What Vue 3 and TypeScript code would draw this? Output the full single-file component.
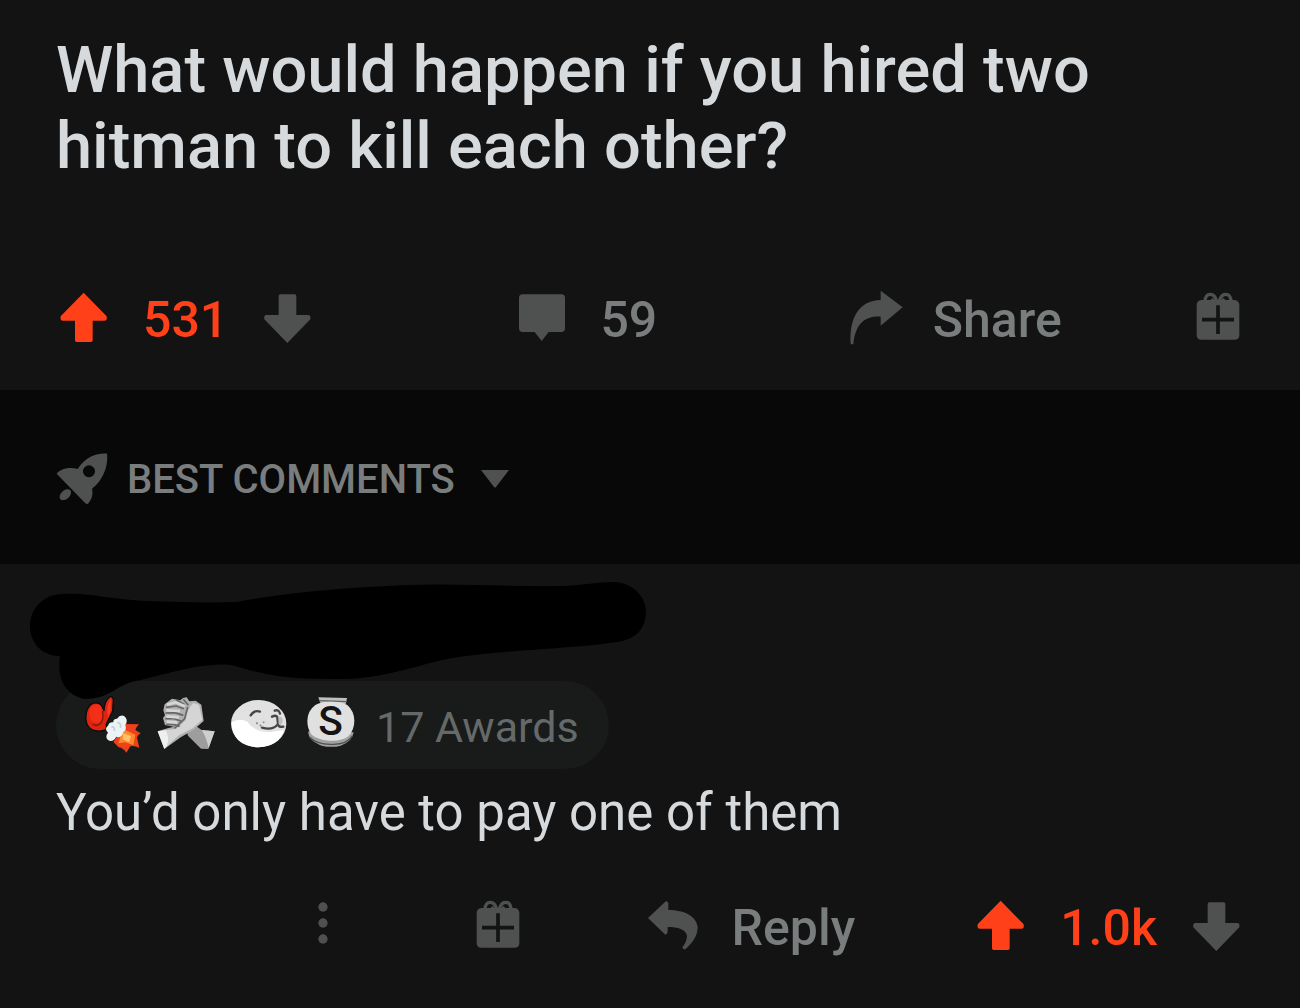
<script setup lang="ts">
import { ref } from 'vue'

interface Thread {
  title: string
  score: string
  comments: number
}

interface Comment {
  body: string
  awards: number
  score: string
}

const thread: Thread = {
  title: 'What would happen if you hired two hitman to kill each other?',
  score: '531',
  comments: 59,
}

const comment: Comment = {
  body: 'You’d only have to pay one of them',
  awards: 17,
  score: '1.0k',
}

const sortOptions: string[] = ['BEST COMMENTS', 'TOP COMMENTS', 'NEW COMMENTS']
const sort = ref(sortOptions[0])
</script>

<template>
  <main class="page">
    <article class="post">
      <h1 class="title">{{ thread.title }}</h1>
      <div class="post-actions">
        <div class="votes">
          <button class="vote up" type="button" aria-label="Upvote">
            <svg viewBox="0 0 141 156"><path d="M71 2 L140 73 Q142 86 134 86 H98 V145 Q98 150 93 150 H50 Q45 150 45 145 V86 H8 Q0 86 2 73 Z" /></svg>
          </button>
          <span class="score">{{ thread.score }}</span>
          <button class="vote" type="button" aria-label="Downvote">
            <svg viewBox="0 0 141 156"><path d="M70 153 L139 82 Q141 69 133 69 H97 V12 Q97 7 92 7 H49 Q44 7 44 12 V69 H7 Q-1 69 1 82 Z" /></svg>
          </button>
        </div>
        <button class="action" type="button" aria-label="Comments">
          <svg class="bubble" viewBox="0 0 144 156"><path d="M14 7 H130 Q141 7 141 18 V109 Q141 120 130 120 H92 L71 147 L50 120 H14 Q3 120 3 109 V18 Q3 7 14 7 Z" /></svg>
          <span>{{ thread.comments }}</span>
        </button>
        <button class="action share" type="button">
          <svg class="share-icon" viewBox="0 0 162 168"><path d="M95 2 L161 52 L95 107 V80 C50 78 20 98 13 163 H5 C0 84 30 31 95 30 Z" /></svg>
          <span>Share</span>
        </button>
        <button class="gift" type="button" aria-label="Give award">
          <svg viewBox="0 0 132 156"><g class="bow"><path d="M62 30 Q58 7 43 7 Q28 7 27 28" /><path d="M70 30 Q74 7 89 7 Q104 7 105 28" /></g><path d="M16 24 H44 L50 17 L55 24 H77 L82 17 L88 24 H116 Q130 26 130 40 V128 Q130 143 116 143 H16 Q2 143 2 128 V40 Q2 26 16 24 Z" /><path class="ribbon" d="M66 40 V126 M18 83 H114" /></svg>
        </button>
      </div>
    </article>

    <div class="sort-bar">
      <label for="sort">
        <svg class="rocket" role="img" aria-label="Sort comments" viewBox="0 0 156 156"><path fill-rule="evenodd" d="M153 2 C125 0 91 8 65 48 C42 42 16 46 2 62 L88 151 Q94 156 98 150 C110 134 111 121 108 107 C144 79 157 36 153 2 Z M99 37 A18 18 0 1 1 98.900 37 Z" /><ellipse cx="28" cy="125" rx="20" ry="13" transform="rotate(-42 28 125)" /></svg>
      </label>
      <select id="sort" v-model="sort" class="sort">
        <option v-for="option in sortOptions" :key="option">{{ option }}</option>
      </select>
      <svg class="caret" viewBox="0 0 30 18"><path d="M1 0 H29 L16 17 Q15 18 14 17 Z" /></svg>
    </div>

    <section class="comment">
      <div class="author">
        <svg class="redaction" viewBox="0 0 616 118"><path d="M33 12 C58 10 76 17 118 19 C150 20 178 21 206 20 C265 9 318 6 376 3 C428 1 482 5 535 4 C552 3 568 0 586 0 C604 2 616 15 616 31 C615 47 606 56 592 59 C549 67 476 67 417 77 C384 84 350 98 307 97 C272 97 245 97 202 83 C174 80 139 91 111 98 C87 101 81 117 55 117 C37 114 26 98 30 74 C12 74 0 61 0 44 C0 27 13 12 33 12 Z" /></svg>
      </div>

      <div class="awards">
        <svg class="award" viewBox="102 66 174 174">
          <path d="M169 150 L188 111 L190 77 Q187 65 179 69 Q163 81 162 111 L153 92 Q140 82 123 91 Q105 108 108 138 Q111 164 135 170 Q151 174 169 167 Z" fill="#df250f" stroke="#080b0b" stroke-width="4" />
          <path d="M121 102 Q139 83 154 99 Q165 119 157 139 Q147 151 130 145 Q112 130 121 102 Z" fill="#f52f17" />
          <path d="M157 111 Q163 133 151 149 Q141 158 128 151" fill="none" stroke="#861c12" stroke-width="5" />
          <path d="M172 112 Q172 85 183 75 L182 110 L174 131 Z" fill="#fa3a21" />
          <path d="M228 150 L267 151 Q258 160 256 168 L272 178 Q262 184 261 190 L268 221 Q252 214 241 217 L229 236 Q220 222 206 220 L190 204 Z" fill="#ed401c" />
          <path d="M219 165 L256 182 L250 213 L225 205 L205 208 Z" fill="#ff882b" />
          <path d="M220 178 L243 186 L238 204 L218 196 Z" fill="#ffc169" />
          <path d="M201 134 Q212 119 225 128 Q235 140 226 153 Q231 168 220 174 Q215 194 199 188 Q188 207 174 198 Q164 188 174 176 Q162 164 174 155 Q178 143 190 145 Q189 134 201 134 Z" fill="#edf3f5" />
          <path d="M184 160 Q195 155 193 171 M202 146 Q215 147 211 161" fill="none" stroke="#bdd2da" stroke-width="5" />
        </svg>
        <svg class="award" viewBox="321 66 174 174">
          <path d="M410 172 L430 151 L455 168 L494 172 L475 225 L453 224 L414 185 Z" fill="#9d9d9d" />
          <path d="M455 168 L494 172 L476 222 Q469 190 455 168 Z" fill="#cecece" />
          <path d="M344 91 L366 74 L391 79 L399 72 L410 70 L418 82 L437 80 L454 92 L461 141 L430 168 L392 190 L343 225 L323 172 L353 163 L372 158 L345 153 L339 132 L345 124 L340 109 Z" fill="#b0b0b0" />
          <path d="M430 87 L447 92 L457 137 L428 163 L387 184 L351 216 Q358 187 348 168 L378 165 L407 139 Q411 104 430 87 Z" fill="#d5d5d5" />
          <path d="M323 172 L348 168 Q359 190 351 216 L343 225 Z" fill="#efefef" />
          <path d="M348 100 L379 96 L402 104 M346 117 L375 116 L400 124 M346 134 L373 134 L397 143 M349 151 L373 152 L389 157 M378 77 L404 92 M400 76 L415 94 M413 99 L404 134 L373 163" fill="none" stroke="#666" stroke-width="5" />
          <path d="M351 92 L377 85 L405 97 M349 109 L390 111 M349 127 L387 130 M350 143 L382 146" fill="none" stroke="#d6d6d6" stroke-width="8" />
        </svg>
        <svg class="award" viewBox="60 66 174 174">
          <ellipse cx="146" cy="149" rx="83" ry="71" fill="#e1e1e1" />
          <path d="M65 145 Q88 130 112 143 Q132 174 181 174 L222 168 Q207 217 145 220 Q66 216 65 145 Z" fill="#fff" />
          <path d="M122 124 Q133 107 150 113 M194 110 Q206 105 210 119 M186 128 Q198 122 202 129 L204 151 Q207 161 220 158 M203 151 Q189 170 156 161" fill="none" stroke="#454545" stroke-width="7" stroke-linecap="round" />
          <path d="M140 145 L142 151 M150 152 L153 157 M160 143 L162 147" stroke="#888" stroke-width="5" />
          <ellipse cx="209" cy="140" rx="9" ry="12" fill="#bebebe" />
          <path d="M202 130 L204 153 Q210 162 219 157" fill="none" stroke="#4a4a4a" stroke-width="5" />
        </svg>
        <svg class="award" viewBox="279 66 174 174">
          <path d="M325 70 L411 72 L407 91 L331 86 Z" fill="#c0c0c0" />
          <path d="M327 80 L411 83" stroke="#606060" stroke-width="4" />
          <path d="M295 172 Q294 200 335 215 Q366 222 392 215 Q428 202 431 175 Z" fill="#a0a0a0" />
          <path d="M298 189 Q322 213 368 211 Q410 212 428 185" fill="none" stroke="#4f4f4f" stroke-width="4" />
          <path d="M316 93 Q330 83 362 83 Q397 83 412 93 Q433 112 433 140 Q433 168 415 187 Q396 202 358 200 Q320 196 305 182 Q292 165 292 140 Q293 110 316 93 Z" fill="#e0e0e0" />
          <text x="362" y="184" text-anchor="middle" class="coin-letter">S</text>
        </svg>
        <span>{{ comment.awards }} Awards</span>
      </div>

      <p class="body">{{ comment.body }}</p>

      <div class="comment-actions">
        <button class="more" type="button" aria-label="More options">
          <svg viewBox="0 0 150 156"><circle cx="75" cy="21" r="14" /><circle cx="75" cy="69" r="14" /><circle cx="75" cy="117" r="14" /></svg>
        </button>
        <button class="gift wide" type="button" aria-label="Give award">
          <svg viewBox="0 0 132 156"><g class="bow"><path d="M62 30 Q58 7 43 7 Q28 7 27 28" /><path d="M70 30 Q74 7 89 7 Q104 7 105 28" /></g><path d="M16 24 H44 L50 17 L55 24 H77 L82 17 L88 24 H116 Q130 26 130 40 V128 Q130 143 116 143 H16 Q2 143 2 128 V40 Q2 26 16 24 Z" /><path class="ribbon" d="M66 40 V126 M18 83 H114" /></svg>
        </button>
        <button class="action reply" type="button">
          <svg class="reply-icon" viewBox="0 0 150 156"><path d="M52 5 L0 54 L52 104 Q61 103 59 81 C88 81 115 87 117 109 Q116 126 103 142 Q105 149 112 148 C132 130 149 109 149 82 C146 49 110 30 61 30 V9 Q59 2 52 5 Z" /></svg>
          <span>Reply</span>
        </button>
        <div class="votes">
          <button class="vote up" type="button" aria-label="Upvote">
            <svg viewBox="0 0 141 156"><path d="M71 2 L140 73 Q142 86 134 86 H98 V145 Q98 150 93 150 H50 Q45 150 45 145 V86 H8 Q0 86 2 73 Z" /></svg>
          </button>
          <span class="score">{{ comment.score }}</span>
          <button class="vote" type="button" aria-label="Downvote">
            <svg viewBox="0 0 141 156"><path d="M70 153 L139 82 Q141 69 133 69 H97 V12 Q97 7 92 7 H49 Q44 7 44 12 V69 H7 Q-1 69 1 82 Z" /></svg>
          </button>
        </div>
      </div>
    </section>
  </main>
</template>

<style>
body {
  margin: 0;
  background: #131313;
}
</style>

<style scoped>
.page {
  font-family: Roboto, "Liberation Sans", sans-serif;
  color: #d7dadc;
}

svg {
  display: block;
  flex: none;
  fill: #4f5050;
}

button {
  display: flex;
  align-items: center;
  padding: 0;
  border: 0;
  background: none;
  color: #7a7d7d;
  font: inherit;
  cursor: pointer;
}

.post {
  padding: 32px 60px 42px 56px;
}

.title {
  margin: 0;
  font-size: 65px;
  line-height: 76px;
  font-weight: 500;
}

.post-actions {
  display: grid;
  grid-template-columns: 458fr 330fr 347fr auto;
  align-items: center;
  margin-top: 104px;
  padding-left: 4px;
}

.post-actions,
.comment-actions {
  font-size: 50px;
  line-height: 56px;
  font-weight: 500;
}

.action span,
.score {
  padding-top: 4px;
}

.votes {
  display: flex;
  align-items: center;
  gap: 36px;
}

.vote svg {
  width: 47px;
  height: 52px;
}

.vote.up svg {
  fill: #ff4019;
}

.score {
  color: #ff4019;
}

.action {
  gap: 34px;
}

.bubble {
  width: 48px;
  height: 52px;
}

.share {
  gap: 30px;
}

.share-icon {
  width: 54px;
  height: 56px;
}

.gift svg {
  width: 44px;
  height: 52px;
}

.gift.wide {
  justify-content: center;
  width: 56px;
}

.bow {
  fill: none;
  stroke: #4f5050;
  stroke-width: 10;
}

.ribbon {
  stroke: #131313;
  stroke-width: 11;
}

.sort-bar {
  display: flex;
  align-items: center;
  padding: 61px 56px 57px;
  background: #080808;
}

.rocket {
  width: 52px;
  height: 52px;
  margin-right: 19px;
}

.sort {
  appearance: none;
  height: 56px;
  padding: 2px 0 0;
  border: 0;
  background: none;
  color: #7a7d7d;
  font: 500 40px/54px Roboto, "Liberation Sans", sans-serif;
}

.caret {
  width: 30px;
  height: 18px;
  margin-left: 24px;
}

.comment {
  padding: 18px 60px 40px 56px;
}

.author {
  position: relative;
  z-index: 1;
  height: 99px;
}

.redaction {
  position: absolute;
  top: 0;
  left: -26px;
  width: 616px;
  height: 118px;
  fill: #000;
}

.awards {
  display: inline-flex;
  align-items: center;
  gap: 15px;
  height: 88px;
  padding: 0 30px 0 28px;
  border-radius: 44px;
  background: #181b1a;
  color: #666969;
  font-size: 43px;
  line-height: 56px;
}

.awards span {
  padding-top: 4px;
}

.award {
  width: 58px;
  height: 58px;
}

.coin-letter {
  font-size: 122px;
  font-weight: 500;
  fill: #141414;
}

.body {
  margin: 16px 0 0;
  font-size: 51px;
  line-height: 56px;
}

.comment-actions {
  display: flex;
  align-items: center;
  justify-content: flex-end;
  gap: 122px;
  margin-top: 55px;
}

.more svg {
  width: 50px;
  height: 52px;
}

.reply-icon {
  width: 50px;
  height: 52px;
}
</style>
